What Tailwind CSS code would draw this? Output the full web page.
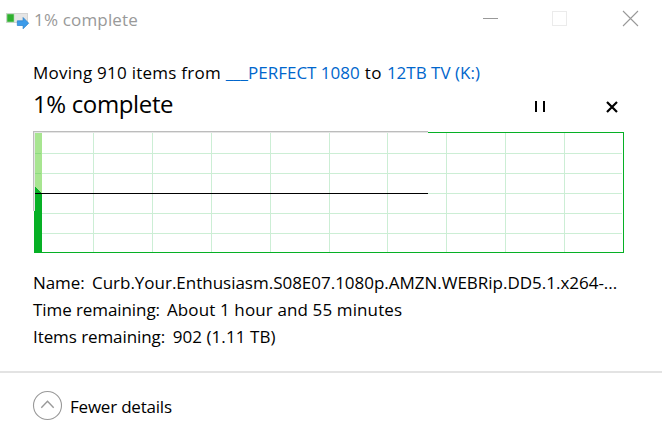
<!DOCTYPE html>
<html lang="en">
<head>
<meta charset="utf-8">
<title>1% complete</title>
<script src="https://cdn.jsdelivr.net/npm/@tailwindcss/browser@4"></script>
</head>
<body class="w-[662px] h-[437px] overflow-hidden bg-white text-black font-['Open_Sans','Noto_Sans',sans-serif] text-[17px] leading-[27px] whitespace-nowrap">
<div class="flex flex-col h-full">
  <header class="flex h-10 shrink-0 items-center pl-[6px] text-[#999999]">
    <svg class="w-6 h-5 shrink-0" viewBox="0 0 24 20">
      <rect x=".5" y="3.5" width="21" height="9" fill="#e5e5e5" stroke="#d4d4d4"/>
      <rect x="1" y="4" width="7" height="8" fill="#2fb02f" stroke="#a8dca8" stroke-width=".6"/>
      <path d="M11.3 10.8h5.8V7.5l5.6 5.7-5.6 5.6v-3.3h-5.8z" fill="#3c9bea" stroke="#2580cc" stroke-width=".7"/>
    </svg>
    <h1 class="ml-[4px] w-[448px] pb-[2px] tracking-[0.17px]">1% complete</h1>
    <svg class="w-[180px] h-10 shrink-0" viewBox="482 0 180 40" fill="none">
      <path d="M483 18.5h15" stroke="#999"/>
      <rect x="552.5" y="11.5" width="14" height="14" stroke="#ebebeb"/>
      <path d="M623 11l15 15m0-15l-15 15" stroke="#999" stroke-width="1.1"/>
    </svg>
  </header>
  <main class="flex flex-col h-[331px] shrink-0 pl-[33px] pt-[19px]">
    <p class="h-[27px]"><span class="tracking-[0.25px]">Moving 910 items from </span><span class="text-[#0066cc]">___PERFECT 1080</span><span class="tracking-[0.5px]"> to </span><span class="text-[#0066cc]">12TB TV (K:)</span></p>
    <div class="flex h-[36px] items-center">
      <h2 class="w-[501px] text-[24px] leading-9 tracking-[-0.36px]">1% complete</h2>
      <svg class="w-[90px] h-9" viewBox="534 86 90 36" fill="none">
        <path d="M536 101v11m8-11v11" stroke="#000" stroke-width="2"/>
        <path d="M607 102l10 10m0-10l-10 10" stroke="#000" stroke-width="2.2"/>
      </svg>
    </div>
    <svg class="w-[591px] h-[131px] shrink-0" viewBox="33 122 591 131" shape-rendering="crispEdges" fill="none">
      <path d="M35 153.5h587M35 173.5h587M35 193.5h587M35 213.5h587M35 233.5h587M93.5 133v119M152.5 133v119M211.5 133v119M270.5 133v119M329.5 133v119M387.5 133v119M446.5 133v119M505.5 133v119M564.5 133v119" stroke="#cceed5"/>
      <path d="M428 132.5h195.5v120H34" stroke="#06b025"/>
      <path d="M35 133h7v60h-7z" fill="#a8e591"/>
      <path d="M35 153.5h6M35 173.5h6" stroke="#8cda80"/>
      <path d="M34 253v-42h1v-24h1v1h1v1h1v1h1v1h1v1h1v1h1v60z" fill="#06b025"/>
      <path d="M35 193.5h393" stroke="#000"/>
      <path d="M34.5 211v-78.5H428" stroke="#e5e5e5"/>
      <path d="M33.5 211v-79.5H428" stroke="#bcbcbc"/>
    </svg>
    <div class="pt-4">
      <p><span class="tracking-[-0.1px]">Name:</span><span class="ml-[7.5px] tracking-[-0.015px]">Curb.Your.Enthusiasm.S08E07.1080p.AMZN.WEBRip.DD5.1.x264-...</span></p>
      <p><span class="tracking-[-0.08px]">Time remaining:</span><span class="ml-[7px] tracking-[0.12px]">About 1 hour and 55 minutes</span></p>
      <p><span class="tracking-[-0.08px]">Items remaining:</span><span class="ml-[7.5px] tracking-[0.07px]">902 (1.11 TB)</span></p>
    </div>
  </main>
  <footer class="flex h-[66px] items-center border-t-2 border-[#e3e3e3] pl-8">
    <svg class="w-[31px] h-[31px]" viewBox="0 0 31 31" fill="none" stroke="#999">
      <circle cx="15.5" cy="15.5" r="14" stroke-width="1.1"/>
      <path d="M9.3 17.7l6.2-6.4 6.2 6.4" stroke-width="1.4"/>
    </svg>
    <span class="ml-[7px] pt-[3px] tracking-[-0.21px]">Fewer details</span>
  </footer>
</div>
</body>
</html>
